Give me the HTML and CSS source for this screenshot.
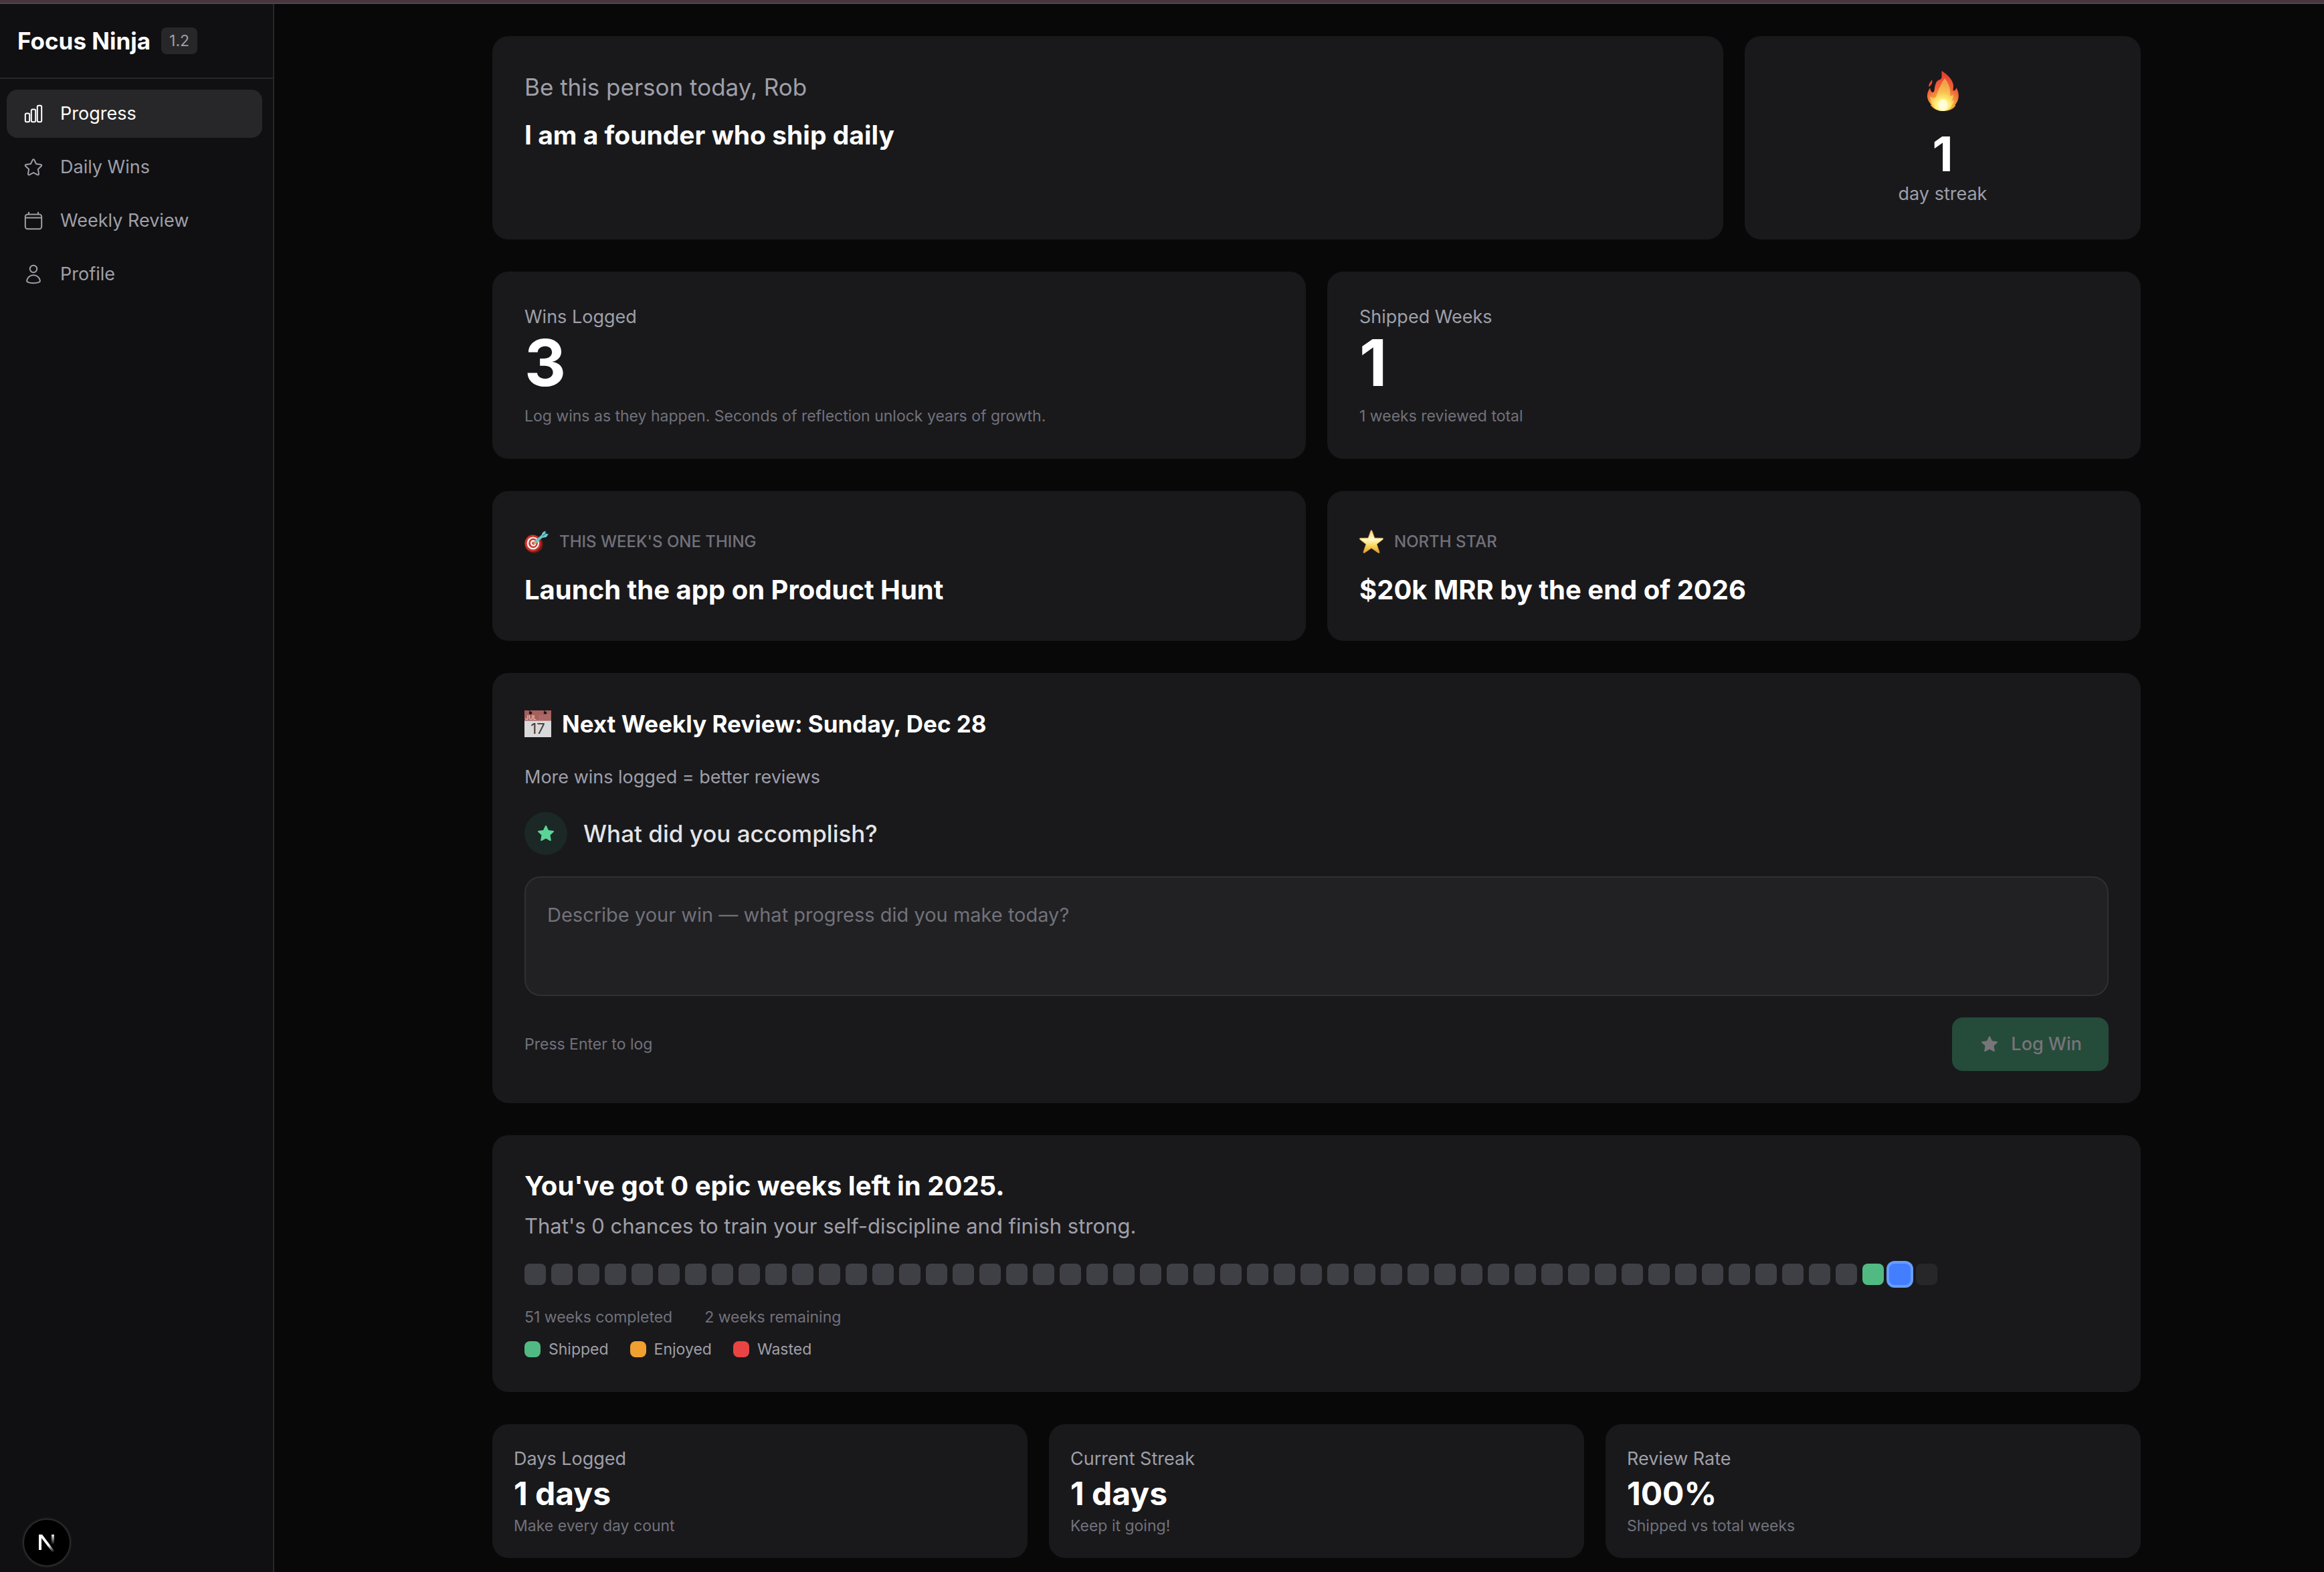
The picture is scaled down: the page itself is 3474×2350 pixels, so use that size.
FILE: index.html
```html
<!DOCTYPE html>
<html lang="en">
<head>
<meta charset="utf-8">
<meta name="viewport" content="width=device-width, initial-scale=1">
<title>Focus Ninja</title>
<link rel="stylesheet" href="styles.css">
</head>
<body>
<div class="top-strip"></div>
<div class="app">
  <aside class="sidebar">
    <div class="brand">
      <span class="brand-name">Focus Ninja</span>
      <span class="version">1.2</span>
    </div>
    <nav class="nav">
      <a class="nav-item active" href="#progress" aria-current="page">
        <svg class="icon" viewBox="0 0 32 32"><rect x="3.8" y="15.4" width="6.4" height="12.8" rx="2"/><rect x="12.8" y="9.6" width="6.4" height="18.6" rx="2"/><rect x="21.8" y="3.8" width="6.4" height="24.4" rx="2"/></svg>
        <span>Progress</span>
      </a>
      <a class="nav-item" href="#wins">
        <svg class="icon" viewBox="0 0 32 32"><path d="M14.9 4.9c.5-1 1.7-1 2.2 0l3 6.1 6.9 1c1.2.2 1.6 1.4.8 2.2l-4.9 4.8 1.1 6.9c.2 1.1-.9 1.9-1.9 1.4L16 24.1l-6.1 3.200c-1 .5-2.100-.3-1.900-1.400L9.100 19l-4.900-4.800c-.8-.8-.4-2 .8-2.200l6.900-1z"/></svg>
        <span>Daily Wins</span>
      </a>
      <a class="nav-item" href="#review">
        <svg class="icon" viewBox="0 0 32 32"><rect x="3.8" y="6.5" width="24.4" height="21.7" rx="3.5"/><path d="M3.8 11.6h24.4M9 2.7v3.8M23 2.7v3.8"/></svg>
        <span>Weekly Review</span>
      </a>
      <a class="nav-item" href="#profile">
        <svg class="icon" viewBox="0 0 32 32"><circle cx="16" cy="8" r="5.2"/><path d="M16 17.3c-5.3 0-9.2 3.6-9.9 8.3-.1.9.3 1.6 1.1 2 2.2 1.1 5.3 1.7 8.8 1.7s6.600-.6 8.800-1.700c.8-.4 1.200-1.100 1.100-2-.7-4.700-4.600-8.300-9.900-8.300z"/></svg>
        <span>Profile</span>
      </a>
    </nav>
  </aside>

  <main class="main">
    <div class="content">
      <section class="grid four">
        <div class="card identity">
          <p class="lead">Be this person today, Rob</p>
          <h1 class="title">I am a founder who ship daily</h1>
        </div>
        <div class="card streak">
          <svg class="flame" viewBox="0 0 60 72" role="img" aria-label="Fire">
            <defs>
              <radialGradient id="fire" gradientUnits="userSpaceOnUse" cx="30" cy="58" r="50">
                <stop offset="0" stop-color="#ffd84f"/><stop offset=".35" stop-color="#f6a03b"/><stop offset=".6" stop-color="#f0643a"/><stop offset="1" stop-color="#e8402c"/>
              </radialGradient>
              <radialGradient id="core" gradientUnits="userSpaceOnUse" cx="30" cy="56" r="34">
                <stop offset="0" stop-color="#fffde0"/><stop offset=".28" stop-color="#fff17c"/><stop offset=".6" stop-color="#f8c04f"/><stop offset="1" stop-color="#f0a04a"/>
              </radialGradient>
            </defs>
            <path fill="url(#fire)" d="M28.5 4c8 5 17 13 17.500 22 .2 3-1 5-.2 7.500 2.200.5 4.200-1.500 4.500-4.500 6 10 3.700 20-2 26l1.200.5c-3 5-10 8.500-18.500 8.500-9 0-14.500-3-19.500-9l1.500-.5C6 47 4.500 39 11.200 29c.3 4 2 7.500 4.800 7 2.500-2 1-7 4-14 2-4.500 4.500-4 7.500-6 2-3 .5-8 1-12z"/>
            <path fill="#ec4a30" d="M14 17c1 4 0 8-4.500 11-1-4.500 2-7 4.500-11z"/>
            <path fill="url(#core)" d="M33 15c7 9 9 17 8 25 1 2 3 2 5-1 0 4-1 7-3 10 2 0 3-1 4-2-1 9-8 17-16.500 17C20 64 12 57 11 42c3 3 6 3 9 1 3-9 7-20 13-28z"/>
            <ellipse cx="30.5" cy="55" rx="7" ry="9" fill="#fffee8" opacity=".7"/>
          </svg>
          <p class="streak-count">1</p>
          <p class="label">day streak</p>
        </div>
      </section>

      <section class="grid two">
        <div class="card">
          <p class="label">Wins Logged</p>
          <p class="figure">3</p>
          <p class="hint">Log wins as they happen. Seconds of reflection unlock years of growth.</p>
        </div>
        <div class="card">
          <p class="label">Shipped Weeks</p>
          <p class="figure">1</p>
          <p class="hint">1 weeks reviewed total</p>
        </div>
      </section>

      <section class="grid two">
        <div class="card goal">
          <div class="goal-head">
            <svg class="goal-icon" viewBox="0 0 36 36" role="img" aria-label="Target"><ellipse cx="14" cy="21.5" rx="13.5" ry="13" fill="#7d1a17"/><ellipse cx="12.5" cy="20" rx="12" ry="12.5" fill="#c9332b"/><ellipse cx="12.8" cy="20" rx="9.2" ry="9.6" fill="#f3eeee"/><ellipse cx="13" cy="20" rx="6.8" ry="7.2" fill="#c9332b"/><ellipse cx="13.2" cy="20" rx="4.4" ry="4.8" fill="#f3eeee"/><circle cx="13.5" cy="20" r="2.3" fill="#c9332b"/><path d="M15 19.500L27 9" stroke="#68c5cc" stroke-width="4" stroke-linecap="round"/><path d="M25 10l2-6 4.500-2.500-.5 4.500 5 .5-3.500 4.500-6 1z" fill="#6fcbd0"/><path d="M27 9.500l6-5" stroke="#2d7f8a" stroke-width="1.5"/><path d="M14.5 20l3.500-3" stroke="#d7a83c" stroke-width="2"/></svg>
            <h2 class="eyebrow">THIS WEEK'S ONE THING</h2>
          </div>
          <p class="title large">Launch the app on Product Hunt</p>
        </div>
        <div class="card goal">
          <div class="goal-head">
            <svg class="goal-icon" viewBox="0 0 36 36" role="img" aria-label="Star"><defs><linearGradient id="gold" x1="0" y1="0" x2="0" y2="1"><stop offset="0" stop-color="#f4d77c"/><stop offset=".4" stop-color="#fff8c9"/><stop offset=".65" stop-color="#f9dc62"/><stop offset="1" stop-color="#e39a2e"/></linearGradient></defs><path d="M18 .8c.7 0 1 .6 1.300 1.500l3.500 9.900 11.700.2c1.400.1 1.600 1.300.6 2.100l-9 7.100 3.800 11.500c.4 1.400-.6 2-1.800 1.200L18 27.400l-10.100 6.900c-1.200.8-2.200.2-1.800-1.200l3.800-11.500-9-7.100c-1-.8-.8-2 .6-2.100l11.700-.2 3.500-9.900C17 1.400 17.300.8 18 .8z" fill="url(#gold)" stroke="#d99a35" stroke-width=".8"/></svg>
            <h2 class="eyebrow">NORTH STAR</h2>
          </div>
          <p class="title large">$20k MRR by the end of 2026</p>
        </div>
      </section>

      <section class="card review">
        <div class="review-head">
          <svg class="calendar" viewBox="0 0 40 40" role="img" aria-label="Calendar"><rect width="40" height="40" fill="#d9d9d9"/><rect width="40" height="15.5" fill="#a5605e"/><circle cx="9" cy="3.8" r="2.3" fill="#1c1517"/><circle cx="31" cy="3.8" r="2.3" fill="#1c1517"/><path d="M7 0l2 3M29 0l2 3" stroke="#1c1517"/><path d="M22.5 7v7M25 7v7M27.5 7v7M30 5.500v8.500M32.500 5.500v8.500M35 5.500v8.500M37.500 5.500v8.500" stroke="#c08a88" stroke-dasharray="1 1"/><text class="cal-month" x="1" y="13.5">JUL</text><text class="cal-day" x="20" y="35">17</text></svg>
          <h2 class="heading">Next Weekly Review: Sunday, Dec 28</h2>
        </div>
        <p class="label">More wins logged = better reviews</p>
        <form class="win-form">
          <div class="prompt">
            <span class="prompt-badge">
              <svg class="star" viewBox="0 0 32 32"><path d="M15.1 4.500c.4-.8 1.400-.8 1.800 0l3 6.500 7.300.9c.9.1 1.200 1.100.6 1.700l-5.300 5 1.300 7.300c.2.9-.7 1.500-1.400 1L16 23.500l-6.400 3.400c-.7.5-1.600-.1-1.400-1l1.300-7.300-5.300-5c-.6-.6-.3-1.600.6-1.700l7.300-.9z"/></svg>
            </span>
            <label class="prompt-label" for="win">What did you accomplish?</label>
          </div>
          <textarea class="win-input" id="win" placeholder="Describe your win — what progress did you make today?"></textarea>
          <div class="form-foot">
            <p class="hint">Press Enter to log</p>
            <button class="log-button" type="submit" disabled>
              <svg class="star" viewBox="0 0 32 32"><path d="M15.1 4.500c.4-.8 1.400-.8 1.800 0l3 6.500 7.300.9c.9.1 1.200 1.100.6 1.700l-5.300 5 1.300 7.300c.2.9-.7 1.500-1.400 1L16 23.500l-6.400 3.400c-.7.5-1.600-.1-1.400-1l1.300-7.300-5.300-5c-.6-.6-.3-1.600.6-1.700l7.300-.9z"/></svg>
              <span>Log Win</span>
            </button>
          </div>
        </form>
      </section>

      <section class="card year">
        <h2 class="title large">You've got 0 epic weeks left in 2025.</h2>
        <p class="subtitle">That's 0 chances to train your self-discipline and finish strong.</p>
        <div class="weeks">
          <i class="week"></i><i class="week"></i><i class="week"></i><i class="week"></i><i class="week"></i><i class="week"></i><i class="week"></i><i class="week"></i><i class="week"></i><i class="week"></i>
          <i class="week"></i><i class="week"></i><i class="week"></i><i class="week"></i><i class="week"></i><i class="week"></i><i class="week"></i><i class="week"></i><i class="week"></i><i class="week"></i>
          <i class="week"></i><i class="week"></i><i class="week"></i><i class="week"></i><i class="week"></i><i class="week"></i><i class="week"></i><i class="week"></i><i class="week"></i><i class="week"></i>
          <i class="week"></i><i class="week"></i><i class="week"></i><i class="week"></i><i class="week"></i><i class="week"></i><i class="week"></i><i class="week"></i><i class="week"></i><i class="week"></i>
          <i class="week"></i><i class="week"></i><i class="week"></i><i class="week"></i><i class="week"></i><i class="week"></i><i class="week"></i><i class="week"></i><i class="week"></i><i class="week"></i>
          <i class="week shipped"></i><i class="week current"></i><i class="week future"></i>
        </div>
        <div class="week-stats hint"><span>51 weeks completed</span><span>2 weeks remaining</span></div>
        <ul class="legend">
          <li><i class="swatch shipped"></i>Shipped</li>
          <li><i class="swatch enjoyed"></i>Enjoyed</li>
          <li><i class="swatch wasted"></i>Wasted</li>
        </ul>
      </section>

      <section class="grid three">
        <div class="card compact">
          <p class="label">Days Logged</p>
          <p class="value">1 days</p>
          <p class="hint">Make every day count</p>
        </div>
        <div class="card compact">
          <p class="label">Current Streak</p>
          <p class="value">1 days</p>
          <p class="hint">Keep it going!</p>
        </div>
        <div class="card compact">
          <p class="label">Review Rate</p>
          <p class="value">100%</p>
          <p class="hint">Shipped vs total weeks</p>
        </div>
      </section>
    </div>
  </main>
</div>

<button class="dev-button" type="button" aria-label="Open developer tools">
  <svg class="dev-logo" viewBox="0 0 28 30" fill="none">
    <defs>
      <linearGradient id="diag" gradientUnits="userSpaceOnUse" x1="17" y1="18" x2="25" y2="29"><stop stop-color="#fff"/><stop offset="1" stop-color="#fff" stop-opacity="0"/></linearGradient>
      <linearGradient id="stem" gradientUnits="userSpaceOnUse" x1="22" y1="2" x2="22" y2="18"><stop stop-color="#fff"/><stop offset="1" stop-color="#fff" stop-opacity="0"/></linearGradient>
    </defs>
    <path d="M2 3h4v23H2z" fill="#fff"/>
    <path d="M2 3h5L26.500 29l-3 2L5 7z" fill="url(#diag)"/>
    <path d="M21 3h4v16h-4z" fill="url(#stem)"/>
  </svg>
</button>
</body>
</html>
```
FILE: styles.css
```css
* {
  box-sizing: border-box;
}

body {
  margin: 0;
  min-height: 100vh;
  display: flex;
  flex-direction: column;
  background: #080809;
  color: #fff;
  font-family: Inter, "Liberation Sans", sans-serif;
  font-size: 27px;
  line-height: 40px;
}

p, h1, h2, ul {
  margin: 0;
  padding: 0;
}

.top-strip {
  height: 6px;
  background: #48363f;
  border-bottom: 2px solid #4d4648;
}

.app {
  flex: 1;
  display: flex;
}

/* Sidebar */

.sidebar {
  flex: 0 0 410px;
  background: #101012;
  border-right: 2px solid #272729;
}

.brand {
  display: flex;
  align-items: center;
  gap: 16px;
  height: 112px;
  padding: 0 26px;
  border-bottom: 2px solid #272729;
}

.brand-name {
  font-size: 35px;
  line-height: 56px;
  font-weight: 700;
}

.version {
  padding: 4px 12px;
  border-radius: 8px;
  background: #272729;
  color: #9f9fa9;
  font-size: 23px;
  line-height: 32px;
}

.nav {
  display: flex;
  flex-direction: column;
  gap: 8px;
  padding: 16px 16px 16px 10px;
}

.nav-item {
  display: flex;
  align-items: center;
  gap: 24px;
  padding: 16px 24px;
  border-radius: 16px;
  color: #9f9fa9;
  text-decoration: none;
}

.nav-item.active {
  background: #272729;
  color: #fff;
}

.icon {
  width: 32px;
  height: 32px;
  fill: none;
  stroke: currentColor;
  stroke-width: 2;
  stroke-linejoin: round;
}

/* Content */

.main {
  flex: 1;
  min-width: 0;
  padding: 48px 48px 20px 100px;
}

.content {
  display: flex;
  flex-direction: column;
  gap: 48px;
  max-width: 2464px;
  margin: 0 auto;
}

.grid {
  display: grid;
  gap: 32px;
}

.two { grid-template-columns: repeat(2, 1fr); }
.three { grid-template-columns: repeat(3, 1fr); }
.four { grid-template-columns: repeat(4, 1fr); }

.card {
  padding: 48px;
  border-radius: 24px;
  background: #19191b;
}

.card.compact {
  padding: 32px;
}

.identity {
  grid-column: span 3;
  display: flex;
  flex-direction: column;
  gap: 16px;
}

.lead {
  color: #9f9fa9;
  font-size: 35px;
  line-height: 56px;
}

.title {
  font-size: 39px;
  line-height: 56px;
  font-weight: 700;
}

.title.large {
  font-size: 40px;
}

.heading {
  font-size: 35px;
  line-height: 56px;
  font-weight: 700;
}

.label {
  color: #9f9fa9;
}

.hint {
  color: #71717b;
  font-size: 23px;
  line-height: 32px;
}

.streak {
  display: flex;
  flex-direction: column;
  align-items: center;
}

.flame {
  width: 60px;
  height: 72px;
  margin-bottom: 16px;
}

.streak-count {
  font-size: 72px;
  line-height: 80px;
  font-weight: 700;
}

.figure {
  margin-bottom: 16px;
  font-size: 96px;
  line-height: 96px;
  font-weight: 700;
}

.value {
  font-size: 48px;
  line-height: 64px;
  font-weight: 700;
}

.goal {
  display: flex;
  flex-direction: column;
  gap: 16px;
}

.goal-head,
.review-head {
  display: flex;
  align-items: center;
  gap: 16px;
  height: 56px;
}

.goal-icon {
  width: 36px;
  height: 36px;
}

.eyebrow {
  color: #71717b;
  font-size: 24px;
  line-height: 32px;
  font-weight: 500;
}

/* Weekly review */

.review,
.win-form {
  display: flex;
  flex-direction: column;
  gap: 32px;
}

.calendar {
  width: 40px;
  height: 40px;
  overflow: visible;
}

.cal-month {
  fill: #e6d3d2;
  font-size: 9px;
  font-weight: 500;
}

.cal-day {
  fill: #3c3c3e;
  font-size: 22px;
  text-anchor: middle;
}

.prompt {
  display: flex;
  align-items: center;
  gap: 24px;
}

.prompt-badge {
  display: grid;
  place-items: center;
  width: 64px;
  height: 64px;
  border-radius: 50%;
  background: #1c2826;
  color: #5bd496;
}

.star {
  width: 32px;
  height: 32px;
  fill: currentColor;
}

.prompt-label {
  color: #e4e4e7;
  font-size: 35px;
  line-height: 56px;
  font-weight: 500;
}

.win-input {
  display: block;
  width: 100%;
  height: 179px;
  padding: 32px;
  border: 2px solid #303032;
  border-radius: 24px;
  background: #212123;
  color: #fff;
  font-family: inherit;
  font-size: 29px;
  line-height: 48px;
  resize: none;
}

.win-input::placeholder {
  color: #71717b;
}

.form-foot {
  display: flex;
  align-items: center;
  justify-content: space-between;
}

.log-button {
  display: flex;
  align-items: center;
  gap: 16px;
  padding: 20px 40px;
  border: 0;
  border-radius: 16px;
  background: #254b3b;
  color: #777578;
  font-family: inherit;
  font-size: 27px;
  line-height: 40px;
  font-weight: 500;
}

/* Year overview */

.subtitle {
  margin-top: 8px;
  color: #9f9fa9;
  font-size: 31px;
  line-height: 48px;
}

.weeks {
  display: flex;
  flex-wrap: wrap;
  gap: 8px;
  margin-top: 32px;
}

.week {
  width: 32px;
  height: 32px;
  border-radius: 8px;
  background: #3f3f46;
}

.week.current {
  background: #437efe;
  box-shadow: 0 0 0 4px #679eff;
}

.week.future {
  background: #272729;
}

.week.shipped,
.swatch.shipped {
  background: #50ba82;
}

.swatch.enjoyed { background: #efa02f; }
.swatch.wasted { background: #e94444; }

.week-stats {
  display: flex;
  gap: 48px;
  margin-top: 32px;
}

.legend {
  display: flex;
  gap: 32px;
  margin-top: 16px;
  list-style: none;
  color: #9f9fa9;
  font-size: 23px;
  line-height: 32px;
}

.legend li {
  display: flex;
  align-items: center;
  gap: 12px;
}

.swatch {
  width: 24px;
  height: 24px;
  border-radius: 8px;
}

/* Floating developer tools button */

.dev-button {
  position: fixed;
  left: 34px;
  bottom: 8px;
  display: grid;
  place-items: center;
  width: 72px;
  height: 72px;
  padding: 0;
  border: 2px solid #2a2a2a;
  border-radius: 50%;
  background: #000;
  box-shadow: 0 0 0 2px #171717;
}

.dev-logo {
  width: 28px;
  height: 30px;
}
```
